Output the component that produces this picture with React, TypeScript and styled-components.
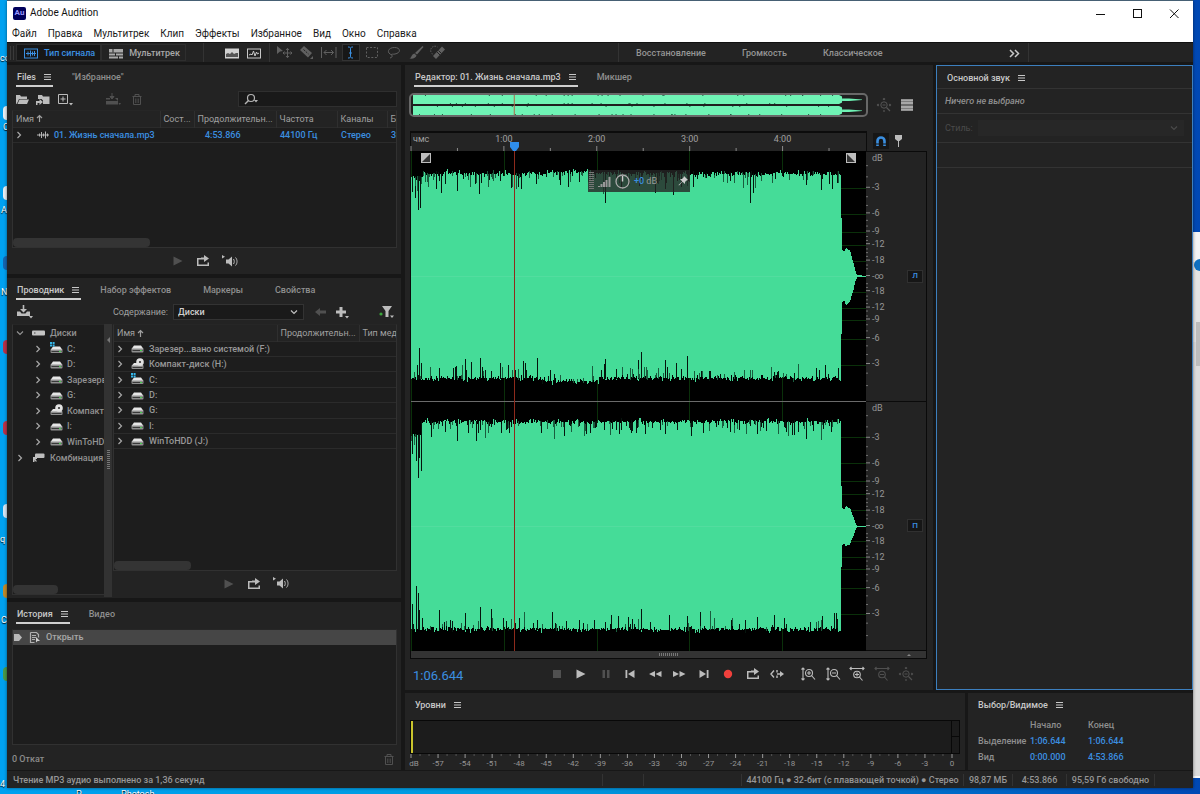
import React from 'react';
import styled, { createGlobalStyle, css } from 'styled-components';

const GlobalStyle = createGlobalStyle`
  * { box-sizing: border-box; }
  body { margin: 0; background: #0091dc; }
  body, button, input, select, table {
    font-family: Roboto, "Noto Sans", sans-serif;
    font-size: 9px;
    line-height: 12px;
    color: #a0a0a0;
  }
  button { background: none; border: 0; padding: 0; margin: 0; cursor: pointer; }
  ul { list-style: none; margin: 0; padding: 0; }
  svg { display: block; }
`;

const BLUE = '#3b8fe0';
const LINE = '#313131';

/* ---------- icons ---------- */

const paths: Record<string, React.ReactNode> = {
  burger: <path d="M1 3.5h7M1 6h7M1 8.5h7" stroke="currentColor" />,
  min: <path d="M2 7.5h9" stroke="currentColor" />,
  max: <rect x="2.5" y="2.5" width="8" height="8" fill="none" stroke="currentColor" />,
  close: <path d="M2 2.5l8.500 8.500M10.500 2.500L2 11" stroke="currentColor" fill="none" />,
  wave: <g fill="none" stroke="currentColor"><rect x=".5" y="3" width="13" height="9" /><path d="M2 7.500h10M4 5.500v4M6.500 4.500v6M8.500 5.500v4M10.500 5v5" /></g>,
  multi: <g fill="currentColor"><path d="M0 3h14v3.500H0zM0 7.500h6v2H0zM7 7.500h7v2H7zM0 10.500h9v2H0zM10 10.500h4v2h-4z" /><path d="M4 3v3.500" stroke="#222" /></g>,
  spectral: <g><rect x=".5" y="3" width="13" height="9" fill="#d0d0d0" stroke="#d0d0d0" /><path d="M1 8l2-1 2 1 2-2 2 2 2-1 2 0v4H1z" fill="#555" /></g>,
  pitch: <g fill="none" stroke="currentColor"><rect x=".5" y="3" width="13" height="9" /><path d="M2 9l2-1 1 1 1.500-4 1.500 5 1.500-4 1 2 1.500-1" /></g>,
  move: <g fill="currentColor"><path d="M0 1l6 5-3 .4L0 9z" /><path d="M10.500 3.500v9M6 8h9M9 5l1.500-1.700L12 5M9 11l1.500 1.700L12 11M7.500 6.500L6 8l1.500 1.500M13.500 6.500L15 8l-1.500 1.500" fill="none" stroke="currentColor" /></g>,
  razor: <g><path d="M1 5l4-4 8 7-4 4.500z" fill="currentColor" /><path d="M4.500 4.500l5 4.500" stroke="#222" strokeDasharray="2 1" /><path d="M14 14v-3l-3 3z" fill="currentColor" /></g>,
  slip: <g fill="none" stroke="currentColor"><path d="M.5 2v11M15 2v11M3 7.500h9.500M5.500 5L3 7.500 5.500 10M10 5l2.500 2.500L10 10" /></g>,
  ibeam: <path d="M5 2c1.500 0 2.500.3 2.500 1.500v8c0 1.200-1 1.500-2.500 1.500M10 2c-1.500 0-2.500.3-2.500 1.500M7.500 11.500c0 1.200 1 1.500 2.500 1.500M6 8h3" fill="none" stroke="currentColor" />,
  marquee: <rect x="1.500" y="2.500" width="11" height="10" fill="none" stroke="currentColor" strokeDasharray="2 1.600" />,
  lasso: <path d="M5 10C-1 8 1 2.500 7.500 2.500S14 8 8 9c-3 .5-4-.5-3 1.500.5 1.500-.5 2-2 2.500" fill="none" stroke="currentColor" />,
  brush: <g fill="currentColor"><path d="M13.500 1l1 1L8 9.500 6 8z" /><path d="M5.500 8.500l2 2C7 13 4 14 .5 13.500 3 12.500 2 9.500 5.500 8.500z" /></g>,
  heal: <g><path d="M2 11l9-9.500 3 3L5 14z" fill="currentColor" /><path d="M6 7l3 3M7.500 5.500l3 3" stroke="#222" /><path d="M1.500 9a4 4 0 0 1 5-7" stroke="currentColor" fill="none" strokeDasharray="1.500 1" /></g>,
  chevrons: <path d="M2 4l3.500 3.500L2 11M7 4l3.500 3.500L7 11" fill="none" stroke="currentColor" strokeWidth="1.500" />,
  folder: <path d="M1 3h4l1 1.500h6V7H4l-2 4.500L1 12zM4.500 7.600H14L12 12H2.500z" fill="currentColor" />,
  importFolder: <g fill="currentColor"><path d="M2 3h4l1 1.500h6.500V12H7V8.500L5.500 7H2z" /><path d="M0 9h3.500V7L7 10l-3.500 3v-2H1.500v2H0z" /></g>,
  newFile: <g><path d="M.5 2.500h9v9h-9zM5 4.500v5M2.500 7h5" fill="none" stroke="currentColor" /><path d="M11 11h4l-2 2.500z" fill="currentColor" /></g>,
  insert: <g fill="currentColor"><path d="M1 6h4v1.500H1zM10 6h3v6.500H1V9h12M1 9h12v1H1z" /><path d="M7 1v5M5 4.500L7 7l2-2.500z" stroke="currentColor" /><path d="M13.500 11H16l-1.200 2z" /></g>,
  trash: <path d="M1.500 4.500h9M4 4.500v-2h4v2M2.500 5v7.500h7V5M4.800 6.500v4.500M7.200 6.500v4.500" fill="none" stroke="currentColor" />,
  search: <g><circle cx="7" cy="6" r="3.500" fill="none" stroke="currentColor" strokeWidth="1.200" /><path d="M4.500 8.500L1 12" stroke="currentColor" strokeWidth="1.500" /><path d="M10 8h4l-2 2.500z" fill="currentColor" /></g>,
  play: <path d="M2.500 2.500l9 4.500-9 4.500z" fill="currentColor" />,
  loop: <g fill="currentColor"><path d="M5 3.500h3V1l5 3.500-5 3.500V5.500H5z" /><path d="M1 4h4v1.500H2.500v5h9V8.500H13v3.500H1z" /></g>,
  speaker: <g><path d="M0 1l3 1.800L0 4.600z" fill="currentColor" /><path d="M4 5.500h2.500L10 2.500v10L6.500 9.500H4z" fill="currentColor" /><path d="M11.500 5c1 1.500 1 3.500 0 5M13.500 3.500c2 2 2 6 0 8" fill="none" stroke="currentColor" /></g>,
  download: <g fill="currentColor"><path d="M1 7.500h3l1.500 2h4l1.500-2h3V12H1z" /><path d="M6.700 1h1.600v4H11L7.500 8.500 4 5h2.700zM13 12h4l-2 2.500z" /></g>,
  back: <path d="M1 7l5-4v2.500h6v3H6V11z" fill="currentColor" />,
  plus: <g fill="currentColor"><path d="M4.500 1h3v3.500H11v3H7.500V11h-3V7.500H1v-3h3.500zM10 10h4l-2 2.500z" /></g>,
  funnel: <g fill="currentColor"><path d="M3 1h10L9.500 6v6h-3V6zM11 10.500h4L13 13z" /><circle cx="2" cy="9" r="1.600" fill="#3aa53a" /></g>,
  chevR: <path d="M4.500 3l3 3-3 3" fill="none" stroke="#a8a8a8" strokeWidth="1.200" />,
  chevD: <path d="M3 4.500l3 3 3-3" fill="none" stroke="currentColor" strokeWidth="1.200" />,
  clip: <path d="M0 6h12M2.500 4.500v3M4.500 3v6M6.500 4.500v3M8.500 2.500v7M10.500 4.500v3" fill="none" stroke="#b4b4b4" />,
  sortUp: <path d="M3.500 8V1.500M1 4l2.500-2.500L6 4" fill="none" stroke="currentColor" strokeWidth="1.200" />,
  disk: <g><rect x="0" y="3.500" width="13" height="5" rx="1" fill="#c4c4c4" /><path d="M2 6h1.500" stroke="#444" /></g>,
  drive: <g><path d="M3 3.500h7L12.500 7H.5z" fill="#e6e6e6" /><rect x=".5" y="6.500" width="12" height="4" rx="1" fill="#8f8f8f" /><path d="M1.500 8.500h10" stroke="#3a3a3a" /><path d="M9 8.500h2" stroke="#42d04a" strokeWidth="1.200" /></g>,
  driveWin: <g><path d="M3 4.500h7L12.500 8H.5z" fill="#e6e6e6" /><rect x=".5" y="7.500" width="12" height="3.500" rx="1" fill="#8f8f8f" /><path d="M1.500 9.500h10" stroke="#3a3a3a" /><path d="M9 9.500h2" stroke="#42d04a" /><path d="M0 0h2v2H0zM2.600 0h2v2h-2zM0 2.600h2v2H0zM2.600 2.600h2v2h-2z" fill="#35b6e8" /></g>,
  driveCd: <g><path d="M3 5h7l2.500 3H.5z" fill="#e6e6e6" /><rect x=".5" y="7.500" width="12" height="3.500" rx="1" fill="#8f8f8f" /><path d="M1.500 9.500h10" stroke="#3a3a3a" /><circle cx="9" cy="4" r="3.800" fill="#e2e2e2" /><circle cx="9" cy="4" r="1.100" fill="#333" /></g>,
  shortcut: <g fill="#bdbdbd"><rect x="3" y="2.500" width="9.500" height="4.500" rx="1" /><path d="M1 6h4v2H3.500L5 10.500H3.500L2.500 9v2H1z" /></g>,
  mark: <path d="M0 2h5l3 3.500L5 9H0z" fill="#b8b8b8" />,
  doc: <g><path d="M1.500 1.500h6l2 2v3M1.500 1.500v10h4M3 4.500h4M3 6.500h4M3 8.500h3" fill="none" stroke="#b0b0b0" strokeWidth="1.200" /><path d="M7 6l4 4H8.500L7 11.500z" fill="#d0d0d0" /></g>,
  zoomAll: <g fill="none" stroke="currentColor"><circle cx="7" cy="7" r="3.200" /><path d="M5.500 7h3M9.500 9.500L13 13M7 0v2M7 12v2M0 7h2M12 7h2M6 1.500L7 .5l1 1M1.500 6l-1 1 1 1M12.500 6l1 1-1 1" strokeWidth="1.200" /></g>,
  list: <g><rect x="1" y="1.500" width="12" height="11" fill="#7d7d7d" /><path d="M1 2h12M1 5h12M1 9h12M1 12h12" stroke="#d4d4d4" /><path d="M1 7h12" stroke="#5c5c5c" /></g>,
  magnet: <g fill="none"><path d="M3.500 12V7a3.500 3.500 0 0 1 7 0v5" stroke="currentColor" strokeWidth="2.600" /><path d="M1.500 10h4M8.500 10h4" stroke="#161616" /></g>,
  pin: <path d="M3 1h7v4L7.500 7H7v6H6V7h-.5L3 5z" fill="currentColor" />,
  stop: <rect x="3" y="3" width="8" height="8" fill="currentColor" />,
  pause: <path d="M3.500 3H6v8H3.500zM8 3h2.500v8H8z" fill="currentColor" />,
  prev: <path d="M2.500 3h1.800v8H2.500zM11.500 3v8L5 7z" fill="currentColor" />,
  next: <path d="M9.700 3h1.800v8H9.700zM2.500 3v8L9 7z" fill="currentColor" />,
  rew: <path d="M7 4v6L1 7zM13.500 4v6l-6-3z" fill="currentColor" />,
  fwd: <path d="M1 4v6l6-3zM7.500 4v6l6-3z" fill="currentColor" />,
  rec: <circle cx="7" cy="7" r="4.200" fill="#f0403c" />,
  skip: <g fill="none" stroke="currentColor" strokeWidth="1.400"><path d="M4 3.500L1 7l3 3.500M7 3v2.500M7 8.500V11M7 7h5" /><path d="M10 4l4 3-4 3z" fill="currentColor" stroke="none" /></g>,
  zoomInV: <g fill="none" stroke="currentColor" strokeWidth="1.100"><path d="M2 1v12M.5 2.500L2 1l1.500 1.500M.5 11.500L2 13l1.500-1.500" /><circle cx="8" cy="6" r="3.500" /><path d="M6 6h4M8 4v4M10.500 8.500l3.500 4" /></g>,
  zoomOutV: <g fill="none" stroke="currentColor" strokeWidth="1.100"><path d="M2 1v12M.5 2.500L2 1l1.500 1.500M.5 11.500L2 13l1.500-1.500" /><circle cx="8" cy="6" r="3.500" /><path d="M6 6h4M10.500 8.500l3.500 4" /></g>,
  zoomInH: <g fill="none" stroke="currentColor" strokeWidth="1.100"><path d="M0 1.500h14M1.500 0L0 1.500 1.500 3M12.500 0L14 1.500 12.500 3" /><circle cx="7" cy="7.500" r="3.300" /><path d="M5 7.500h4M7 5.500v4M9.500 10l3 3.500" /></g>,
  zoomOutH: <g fill="none" stroke="currentColor" strokeWidth="1.100"><path d="M0 1.500h14M1.500 0L0 1.500 1.500 3M12.500 0L14 1.500 12.500 3" /><circle cx="7" cy="7.500" r="3.300" /><path d="M5 7.500h4M9.500 10l3 3.500" /></g>,
};

const Glyph = styled.svg<{ $dim?: boolean }>`
  flex: none;
  overflow: visible;
  color: ${(p) => (p.$dim ? '#555' : 'inherit')};
`;

function Icon({ name, size = 14, dim }: { name: string; size?: number; dim?: boolean }) {
  return (
    <Glyph $dim={dim} width={size} height={size} viewBox={`0 0 ${size} ${size}`} aria-hidden="true">
      {paths[name]}
    </Glyph>
  );
}

/* ---------- desktop and window frame ---------- */

const Desktop = styled.div`
  position: relative;
  min-height: 100vh;
  padding: 1px 7px 6px;
  display: flex;
  overflow: hidden;
  background: linear-gradient(90deg, #00a1f0 0%, #009ade 45%, #0071cc 75%, #0048b4 100%);
`;

const DesktopLabel = styled.span<{ $y: number; $x?: number }>`
  position: absolute;
  top: ${(p) => p.$y}px;
  left: ${(p) => p.$x ?? 0}px;
  color: #fff;
  text-shadow: 0 1px 1px #000;
  white-space: nowrap;
`;

const DesktopIcon = styled.span<{ $y: number; $c: string }>`
  position: absolute;
  top: ${(p) => p.$y}px;
  left: 3px;
  width: 14px;
  height: 14px;
  border-radius: 4px;
  background: ${(p) => p.$c};
`;

const BackWindow = styled.div`
  position: absolute;
  right: 0;
  top: 232px;
  bottom: 16px;
  width: 40px;
  background: linear-gradient(#f4f4f4 0 30px, #e4e4e4 30px 110px, #dcdcdc 110px);
  border-bottom: 2px solid #f8f8f8;
`;

const BackScroll = styled.div`
  position: absolute;
  right: 0;
  top: 90px;
  width: 4px;
  height: 44px;
  background: #bdbdbd;
`;

const BackBadge = styled.div`
  position: absolute;
  right: -6px;
  top: 27px;
  width: 12px;
  height: 12px;
  border-radius: 50%;
  background: #1070c0;
`;

const Window = styled.div`
  position: relative;
  flex: 1;
  min-width: 0;
  display: flex;
  flex-direction: column;
  background: #171717;
  box-shadow: 0 -1px 0 #466074, 0 0 3px rgba(0, 0, 0, 0.5);
`;

const TitleBar = styled.header`
  display: flex;
  align-items: center;
  height: 24px;
  padding-left: 6px;
  background: #fff;
  color: #111;
`;

const Logo = styled.span`
  width: 13px;
  height: 13px;
  margin-right: 4px;
  border-radius: 2px;
  background: #00005b;
  color: #9999ff;
  font-size: 8px;
  font-weight: 700;
  text-align: center;
`;

const AppName = styled.h1`
  flex: 1;
  margin: 0;
  font-size: 10px;
  font-weight: 400;
`;

const FrameButton = styled.button`
  display: flex;
  align-items: center;
  justify-content: center;
  width: 37px;
  height: 22px;
  color: #111;
`;

const MenuBar = styled.nav`
  display: flex;
  gap: 11px;
  height: 17px;
  padding-left: 5px;
  background: #fff;
`;

const MenuItem = styled.button`
  font-size: 10px;
  line-height: 16px;
  color: #1a1a1a;
`;

/* ---------- tool bar ---------- */

const ToolBar = styled.div`
  display: flex;
  align-items: center;
  height: 20px;
  margin-bottom: 3px;
  background: #232323;
  border-top: 1px solid #111;
`;

const Grip = styled.span`
  width: 4px;
  height: 14px;
  margin: 0 2px 0 3px;
  border: solid #3a3a3a;
  border-width: 0 1px;
`;

const ModeButton = styled.button<{ $on?: boolean }>`
  display: flex;
  align-items: center;
  gap: 6px;
  height: 17px;
  padding: 0 5px 0 7px;
  border: 1px solid #2e2e2e;
  background: ${(p) => (p.$on ? '#171717' : 'transparent')};
  color: ${(p) => (p.$on ? BLUE : '#a8a8a8')};
  font-weight: 500;
`;

const Divider = styled.span<{ $gap: number }>`
  width: 1px;
  align-self: stretch;
  margin: 0 ${(p) => p.$gap}px;
  background: #333;
`;

const ToolButton = styled.button<{ $on?: boolean; $dim?: boolean }>`
  display: flex;
  align-items: center;
  justify-content: center;
  width: 22px;
  height: 17px;
  color: ${(p) => (p.$on ? BLUE : p.$dim ? '#606060' : '#c8c8c8')};
  ${(p) => p.$on && css`
    background: #171717;
    border: 1px solid #333;
    width: 18px;
    margin: 0 2px;
  `}
`;

const Workspaces = styled.nav`
  display: flex;
  align-items: center;
  gap: 36px;
  width: 411px;
  height: 100%;
  margin-left: auto;
  padding: 0 6px 0 17px;
  border: solid #333;
  border-width: 0 1px;
`;

const WorkspaceButton = styled.button`
  font-weight: 500;
  color: #959595;
  &:last-child { margin-left: auto; color: #c8c8c8; }
`;

const ToolTail = styled.div`
  flex: 0 0 164px;
`;

/* ---------- panels ---------- */

const Workspace = styled.main`
  flex: 1;
  display: grid;
  grid-template-columns: 394px minmax(0, 1fr);
  gap: 4px;
  min-height: 704px;
`;

const LeftColumn = styled.div`
  display: grid;
  grid-template-rows: 209fr 319fr 168fr;
  gap: 4px;
  min-width: 0;
`;

const RightArea = styled.div`
  display: grid;
  grid-template-rows: minmax(0, 1fr) 77px;
  gap: 3px;
  min-width: 0;
`;

const Split = styled.div<{ $side: number }>`
  display: grid;
  grid-template-columns: minmax(0, 1fr) ${(p) => p.$side}px;
  gap: 3px;
  min-width: 0;
`;

const Panel = styled.section<{ $focus?: boolean }>`
  display: flex;
  flex-direction: column;
  min-width: 0;
  min-height: 0;
  background: #232323;
  ${(p) => p.$focus && css`border: 1px solid #3c7fbe;`}
`;

const Tabs = styled.div`
  display: flex;
  flex: none;
  height: 22px;
  padding: 6px 0 0 9px;
  gap: 18px;
`;

const Tab = styled.button<{ $on?: boolean; $line?: boolean }>`
  display: flex;
  gap: 7px;
  height: 16px;
  padding: 0 1px;
  margin-right: ${(p) => (p.$on ? 0 : 12)}px;
  border-bottom: 2px solid ${(p) => (p.$line ? '#cfcfcf' : 'transparent')};
  color: ${(p) => (p.$on ? '#c8c8c8' : '#8f8f8f')};
  font-weight: 500;
  white-space: nowrap;
`;

const Bar = styled.div`
  display: flex;
  align-items: center;
  flex: none;
  height: 23px;
  padding: 0 4px 0 8px;
`;

const Gap = styled.span<{ $w?: number }>`
  flex: ${(p) => (p.$w ? `0 0 ${p.$w}px` : '1')};
`;

const IconButton = styled.button<{ $dim?: boolean; $w?: number }>`
  display: flex;
  align-items: center;
  justify-content: center;
  width: ${(p) => p.$w ?? 22}px;
  height: 18px;
  color: ${(p) => (p.$dim ? '#505050' : '#bcbcbc')};
`;

const SearchBox = styled.label`
  display: flex;
  align-items: center;
  width: 159px;
  height: 16px;
  padding-left: 5px;
  border: 1px solid #2f2f2f;
  background: #191919;
  color: #b4b4b4;
`;

const SearchInput = styled.input`
  flex: 1;
  min-width: 0;
  border: 0;
  outline: 0;
  background: transparent;
`;

const Well = styled.div`
  position: relative;
  flex: 1;
  min-width: 0;
  min-height: 0;
  overflow: hidden;
  background: #1d1d1d;
  border: 1px solid ${LINE};
  border-top-color: #262626;
`;

const FilesWell = styled(Well)`margin: 0 4px 0 5px;`;
const HistoryWell = styled(Well)`margin: 5px 4px 0 5px;`;

const Thumb = styled.div<{ $w: number }>`
  position: absolute;
  left: 0;
  bottom: 0;
  width: ${(p) => p.$w}px;
  height: 9px;
  border-radius: 4px;
  background: #343434;
`;

const Player = styled.div`
  display: flex;
  align-items: center;
  justify-content: center;
  gap: 3px;
  flex: none;
  height: 26px;
`;

const Table = styled.table`
  width: 440px;
  table-layout: fixed;
  border-collapse: collapse;
`;

const Th = styled.th<{ $w?: number }>`
  width: ${(p) => (p.$w ? `${p.$w}px` : 'auto')};
  height: 16px;
  padding: 0 0 0 3px;
  background: #232323;
  border-right: 1px solid #2f2f2f;
  font-weight: 400;
  text-align: left;
  white-space: nowrap;
  overflow: hidden;
`;

const Td = styled.td<{ $blue?: boolean; $indent?: number }>`
  height: 15px;
  padding: 0 0 0 ${(p) => p.$indent ?? 4}px;
  border-top: 1px solid #2b2b2b;
  border-bottom: 1px solid #2b2b2b;
  color: ${(p) => (p.$blue ? BLUE : '#989898')};
  font-weight: 500;
  white-space: nowrap;
`;

const NameCell = styled.span<{ $gap?: number }>`
  display: flex;
  align-items: center;
  gap: ${(p) => p.$gap ?? 5}px;
`;

/* ---------- explorer ---------- */

const Label = styled.label`
  white-space: nowrap;
  margin-right: 5px;
`;

const SelectBox = styled.span<{ $off?: boolean }>`
  display: flex;
  align-items: center;
  width: ${(p) => (p.$off ? 'auto' : '131px')};
  flex: ${(p) => (p.$off ? 1 : 'none')};
  height: 16px;
  padding-right: 3px;
  border: 1px solid ${(p) => (p.$off ? '#272727' : '#333')};
  background: ${(p) => (p.$off ? '#272727' : '#1a1a1a')};
  color: ${(p) => (p.$off ? '#4a4a4a' : '#c0c0c0')};
`;

const Select = styled.select`
  flex: 1;
  min-width: 0;
  appearance: none;
  border: 0;
  padding: 0 4px;
  background: transparent;
  color: #d0d0d0;
  font-weight: 500;
`;

const ExplorerBody = styled.div`
  display: flex;
  flex: 1;
  min-height: 0;
  margin: 1px 4px 1px 5px;
`;

const TreeWell = styled(Well)`
  flex: 0 0 92px;
  border-right: 0;
  margin-bottom: 2px;
`;

const Tree = styled.ul`
  display: grid;
  grid-auto-rows: 1fr;
  height: 140px;
`;

const TreeItem = styled.li<{ $level: number }>`
  display: flex;
  align-items: center;
  gap: ${(p) => (p.$level ? 4 : 5)}px;
  padding-left: ${(p) => (p.$level ? 19 : 1)}px;
  font-weight: 500;
  color: #929292;
  white-space: nowrap;
  & > svg:first-child { margin-right: ${(p) => (p.$level ? 2 : 1)}px; }
`;

const Splitter = styled.div`
  display: flex;
  flex-direction: column;
  justify-content: space-between;
  align-items: center;
  flex: 0 0 8px;
  margin-right: 1px;
  padding: 13px 1px 127px;
  background: #323232;
`;

const Arrow = styled.span`
  border: 3px solid transparent;
  border-left: 0;
  border-right-color: #777;
`;

const SplitDots = styled.span`
  width: 3px;
  height: 20px;
  background: repeating-linear-gradient(#777 0 1px, transparent 1px 2px);
`;

const ListSide = styled.div`
  display: flex;
  flex-direction: column;
  flex: 1;
  min-width: 0;
`;

const ListTable = styled(Table)`height: 124px;`;

/* ---------- history ---------- */

const HistoryRow = styled.div`
  display: flex;
  align-items: center;
  gap: 5px;
  height: 15px;
  padding-left: 1px;
  background: #464646;
  color: #a8a8a8;
  font-weight: 500;
`;

const PanelFoot = styled.footer`
  display: flex;
  align-items: center;
  justify-content: space-between;
  flex: none;
  height: 25px;
  padding: 2px 6px 0 5px;
  color: #8c8c8c;
  font-weight: 500;
`;

/* ---------- editor ---------- */

const OverviewRow = styled.div`
  display: flex;
  align-items: center;
  gap: 9px;
  flex: none;
  height: 26px;
  margin-top: 5px;
  padding-left: 4px;
`;

const Overview = styled.div`
  flex: 1;
  height: 24px;
  border: 2px solid #686868;
  border-radius: 5px;
  background: #1f1f1f;
  padding: 0 2px;
`;

const SideTools = styled.div`
  display: flex;
  gap: 9px;
  width: 56px;
`;

const RulerRow = styled.div`
  display: flex;
  align-items: center;
  flex: none;
  margin-top: 13px;
  padding-left: 5px;
  height: 20px;
`;

const Ruler = styled.div`
  position: relative;
  flex: 1;
  height: 20px;
  border: 1px solid #0c0c0c;
  border-width: 2px 1px 0;
  background: #242424;
`;

const RulerLabels = styled.div`
  display: grid;
  grid-template-columns: 10.200% repeat(4, 20.417%) 1fr;
  color: #a0a0a0;
  text-align: center;
  & > :first-child { text-align: left; padding-left: 2px; }
`;

const RulerTicks = styled.svg`
  position: absolute;
  left: 0;
  bottom: 0;
  width: 100%;
  height: 5px;
  overflow: visible;
`;

const RulerTools = styled.div`
  display: flex;
  align-items: center;
  gap: 3px;
  width: 66px;
  padding-left: 6px;
`;

const MagnetButton = styled.button`
  display: flex;
  align-items: center;
  justify-content: center;
  width: 16px;
  height: 16px;
  background: #161616;
  color: ${BLUE};
`;

const WaveRow = styled.div`
  display: grid;
  grid-template-columns: minmax(0, 1fr) 60px;
  flex: 1;
  min-height: 0;
  margin: 0 6px 0 5px;
  border: 1px solid #0a0a0a;
  border-width: 0 1px;
`;

const WaveArea = styled.div`
  position: relative;
  background: #000;
  overflow: hidden;
`;

const Fill = styled.svg`
  position: absolute;
  inset: 0;
  width: 100%;
  height: 100%;
`;

const Playhead = styled.span`
  position: absolute;
  left: 22.700%;
  top: 0;
  bottom: 0;
  width: 1px;
  background: #8e2a1c;
`;

const PlayheadCap = styled.svg`
  position: absolute;
  left: 22.700%;
  bottom: 0;
  margin-left: -4px;
`;

const Hud = styled.div`
  position: absolute;
  left: 38.900%;
  top: 19px;
  display: flex;
  align-items: center;
  gap: 4px;
  width: 102px;
  height: 22px;
  padding-right: 2px;
  background: rgba(38, 38, 38, 0.8);
`;

const HudGrip = styled.span`
  width: 5px;
  height: 18px;
  margin-left: 1px;
  background: repeating-linear-gradient(#777 0 1px, transparent 1px 2px);
`;

const HudText = styled.span`
  flex: 1;
  color: #9a9a9a;
  b { color: ${BLUE}; font-weight: 500; }
`;

const FadeButton = styled.button<{ $right?: boolean }>`
  position: absolute;
  top: 2px;
  ${(p) => (p.$right ? 'right: 10px;' : 'left: 10px;')}
`;

const Scales = styled.div`
  display: grid;
  grid-template-rows: 1fr 1fr;
  border-top: 1px solid #0a0a0a;
`;

const Scale = styled.div`
  display: flex;
  align-items: center;
  border-bottom: 1px solid #0a0a0a;
  padding-right: 3px;
`;

const ScaleSvg = styled.svg`
  flex: 1;
  min-width: 0;
  height: 100%;
  overflow: visible;
  font-size: 9px;
  fill: #969696;
`;

const ChannelButton = styled.button`
  width: 16px;
  height: 13px;
  border: 1px solid #303030;
  background: #161616;
  color: ${BLUE};
  font-size: 8px;
  line-height: 10px;
  font-weight: 500;
`;

const HScroll = styled.div`
  display: grid;
  grid-template-columns: 1fr 20px 1fr;
  align-items: center;
  flex: none;
  height: 8px;
  margin: 0 6px 0 5px;
  border: 1px solid #0a0a0a;
  border-top: 0;
  background: #333;
`;

const ScrollDots = styled.span`
  height: 3px;
  background: repeating-linear-gradient(90deg, #777 0 1px, transparent 1px 2px);
`;

const UpArrow = styled.span`
  justify-self: end;
  margin-right: 15px;
  border: 2px solid transparent;
  border-top: 0;
  border-bottom-color: #888;
`;

const Transport = styled.div`
  display: flex;
  align-items: center;
  flex: none;
  height: 31px;
  padding: 0 16px 2px 8px;
`;

const TimeCode = styled.span`
  flex: 1;
  padding-top: 4px;
  font-size: 13px;
  line-height: 16px;
  color: ${BLUE};
`;

const ButtonSet = styled.div<{ $w: number }>`
  display: flex;
  justify-content: space-between;
  width: ${(p) => p.$w}px;
  & + & { margin-left: 9px; }
`;

/* ---------- levels / selection / essential sound ---------- */

const Meter = styled.div`
  display: grid;
  grid-template: 1fr 1fr / 1fr 8px;
  height: 34px;
  margin: 5px 5px 0;
  border: 1px solid #080808;
  background: #1c1c1c;
`;

const MeterCell = styled.span<{ $lit?: boolean }>`
  border-left: ${(p) => (p.$lit ? '2px solid #c9c42c' : '1px solid #080808')};
  &:nth-child(2) { border-bottom: 1px solid #080808; }
`;

const MeterScale = styled.svg`
  width: auto;
  height: 15px;
  margin: 0 13px 0 6px;
  overflow: visible;
  font-size: 8px;
  fill: #969696;
`;

const SelTable = styled.table`
  width: 168px;
  margin: 2px 0 0 9px;
  border-collapse: collapse;
  table-layout: fixed;
  th, td { height: 16px; padding: 0 0 0 1px; text-align: left; font-weight: 500; color: #8f8f8f; white-space: nowrap; }
  td { color: ${BLUE}; }
  th:first-child { width: 52px; }
`;

const SoundRow = styled.div<{ $h: number }>`
  display: flex;
  align-items: center;
  flex: none;
  height: ${(p) => p.$h}px;
  padding: 0 8px;
  border-top: 1px solid #333;
`;

const Nothing = styled.em`
  font-weight: 500;
  color: #8f8f8f;
`;

const OffLabel = styled(Label)`color: #4a4a4a;`;

const StatusBar = styled.footer`
  display: flex;
  align-items: center;
  height: 17px;
  margin-top: 1px;
  padding-left: 6px;
  background: #232323;
  font-weight: 500;
  color: #969696;
`;

const StatusMain = styled.span`flex: 1;`;

const StatusCell = styled.span<{ $w: number }>`
  width: ${(p) => p.$w}px;
  border-left: 1px solid #333;
  text-align: center;
  white-space: nowrap;
`;

/* ---------- waveform geometry ---------- */

const W = 456;
const END = 431;

function random(seed: number) {
  let s = seed;
  return () => {
    s = (s * 1664525 + 1013904223) % 4294967296;
    return s / 4294967296;
  };
}

type Edge = { base: (x: number) => number; dir: 1 | -1; seed: number; busy: number; peaks: [number, number][] };

/* One edge of a channel: an outline plus dark spikes that cut into the body. */
function buildEdge({ base, dir, seed, busy, peaks }: Edge) {
  const r = random(seed);
  const outline: string[] = [];
  const spikes: string[] = [];
  const soft: string[] = [];
  for (let x = 0; x < END; x++) {
    const y = base(x) + dir * Math.round(r() * r() * 4 - r() * r() * 5 + 1);
    outline.push(`${x},${y} ${x + 1},${y}`);
    const roll = r();
    if (roll < busy) {
      const h = 3 + Math.round(r() * r() * 18);
      (r() > 0.45 ? soft : spikes).push(`M${x + 0.5} ${y}v${dir * h}`);
    }
  }
  peaks.forEach(([x, h]) => spikes.push(`M${x + 0.5} ${base(x)}v${dir * h}`));
  return { outline, spikes: spikes.join(''), soft: soft.join('') };
}

const channels = [
  {
    mid: 125.5,
    tail: 1,
    top: buildEdge({ dir: 1, seed: 11, busy: 0.3, base: (x) => (x < 12 ? 25 : 22 - (x > 135 && x < 180 ? 2 : 0)), peaks: [[1, 16], [4, 22], [7, 34], [9, 32], [30, 20], [46, 18], [68, 21], [107, 14], [194, 30], [245, 20], [263, 22], [340, 30], [343, 20], [411, 17], [422, 16]] }),
    bottom: buildEdge({ dir: -1, seed: 23, busy: 0.16, base: (x) => (x > 130 && x < 188 ? 231 : 228), peaks: [[8, 31], [10, 16], [28, 11], [44, 12], [54, 20], [60, 17], [69, 21], [80, 8], [89, 16], [97, 14], [104, 9], [112, 18], [115, 9], [126, 21], [190, 9], [193, 15], [194, 20], [205, 10], [228, 19], [231, 27], [257, 12], [266, 16], [277, 23], [406, 11], [415, 14]] }),
  },
  {
    mid: 376,
    tail: 0.7,
    top: buildEdge({ dir: 1, seed: 37, busy: 0.24, base: (x) => (x < 10 ? 284 : 271), peaks: [[1, 20], [5, 27], [7, 44], [8, 24], [10, 50], [20, 16], [34, 11], [57, 12], [65, 20], [130, 12], [175, 13], [208, 13], [225, 12], [281, 15], [382, 14], [396, 18]] }),
    bottom: buildEdge({ dir: -1, seed: 53, busy: 0.15, base: () => 480, peaks: [[1, 26], [5, 44], [7, 37], [8, 20], [28, 20], [39, 10], [54, 17], [69, 23], [80, 21], [108, 12], [126, 10], [144, 7], [155, 9], [183, 10], [207, 14], [217, 13], [231, 21], [259, 15], [277, 14], [290, 18], [347, 13], [364, 15], [412, 14]] }),
  },
];

const tail = (mid: number, s: number) =>
  [[431, 58], [432, 58], [432, 27], [434, 24], [436, 29], [438, 27], [440, 26], [442, 18], [444, 12], [445, 6], [447, 1], [456, 0.5]]
    .map(([x, h]) => `${x},${mid + s * h}`);

function Waves() {
  return (
    <Fill viewBox={`0 0 ${W} 501`} preserveAspectRatio="none" shapeRendering="crispEdges" aria-label="Форма сигнала">
      {[0, 93, 186, 279, 372].map((x) => <path key={x} d={`M${x + 0.5} 0V501`} stroke="#0a300a" />)}
      {[37, 63, 81, 94, 110, 141, 157, 169, 188, 214, 287, 313, 331, 344, 360, 391, 407, 419, 438, 464].map((y) => (
        <path key={y} d={`M0 ${y + 0.5}H456`} stroke="#0a300a" />
      ))}
      {channels.map((c) => (
        <g key={c.mid}>
          <polygon
            fill="#45dc98"
            points={[...c.top.outline, ...tail(c.mid, -c.tail), ...tail(c.mid, c.tail).reverse(), ...[...c.bottom.outline].reverse().map((p) => p.split(' ').reverse().join(' '))].join(' ')}
          />
          <path d={c.top.spikes + c.bottom.spikes} stroke="#06130c" />
          <path d={c.top.soft + c.bottom.soft} stroke="#1a5c3d" />
          <path d={`M0 ${c.mid}H447`} stroke="#52dd9f" />
        </g>
      ))}
      <path d="M0 250.500H456" stroke="#6a6a6a" />
    </Fill>
  );
}

function OverviewWave() {
  const r = random(7);
  const nicks = Array.from({ length: 90 }, () => {
    const x = Math.round(r() * 428);
    return `M${x + 0.5} ${[0, 8, 11, 19][Math.floor(r() * 4)]}v1`;
  }).join('');
  return (
    <svg width="100%" height="20" viewBox="0 0 452 20" preserveAspectRatio="none" aria-label="Обзор">
      <path d="M0 0H427L430 1.500V7.500L427 9H0zM0 11H427L430 12.500V18.500L427 20H0z" fill="#6ff3b5" />
      <path d="M430 3.500H437L450 4.500V5L437 6H430zM430 14.500H437L450 15.500V16L437 17H430z" fill="#6ff3b5" />
      <path d={nicks} stroke="#1d5a40" />
      <path d="M101.500 0V20" stroke="#b06a4a" />
    </svg>
  );
}

function FadeIcon({ flip }: { flip?: boolean }) {
  return (
    <svg width="10" height="10" viewBox="0 0 10 10" aria-hidden="true">
      <rect width="10" height="10" fill="#bdbdbd" />
      <path d={flip ? 'M1 1L9 9H1z' : 'M9 1V9H1z'} fill="#333" />
    </svg>
  );
}

const marks: [string, number][] = [['dB', 2.4], ['-3', 14.2], ['-6', 24.5], ['-9', 31.8], ['-12', 36.9], ['-18', 43.5], ['-∞', 49.7], ['-18', 55.8], ['-12', 62.4], ['-9', 67.2], ['-6', 74.7], ['-3', 85.1]];
const minor = [5.5, 10, 18, 21.5, 27.5, 29.8, 34, 35.6, 39, 40.5, 42, 45.5, 47, 53, 54.5, 58, 59.5, 61, 64, 66, 69.5, 72, 78, 81.5, 89, 94];

function ScaleAxis() {
  return (
    <ScaleSvg width="40">
      {marks.map(([t, y], i) => (
        <g key={i}>
          {i > 0 && <line x1="0" x2="4" y1={`${y}%`} y2={`${y}%`} stroke="#888" />}
          <text x="6" y={`${y}%`} dominantBaseline="central">{t}</text>
        </g>
      ))}
      {minor.map((y) => <line key={y} x1="0" x2="2" y1={`${y}%`} y2={`${y}%`} stroke="#707070" />)}
    </ScaleSvg>
  );
}

/* ---------- data ---------- */

const drives: [string, string][] = [['Зарезер...вано системой (F:)', 'drive'], ['Компакт-диск (H:)', 'driveCd'], ['C:', 'driveWin'], ['D:', 'drive'], ['G:', 'drive'], ['I:', 'drive'], ['WinToHDD (J:)', 'drive']];
const tree: [string, string][] = [['C:', 'driveWin'], ['D:', 'drive'], ['Зарезервировано', 'drive'], ['G:', 'drive'], ['Компакт-диск', 'driveCd'], ['I:', 'drive'], ['WinToHDD (J:)', 'drive']];
const tools: [string, string][] = [['move', 'Перемещение'], ['razor', 'Лезвие'], ['slip', 'Сдвиг'], ['ibeam', 'Выделение времени'], ['marquee', 'Область'], ['lasso', 'Лассо'], ['brush', 'Кисть'], ['heal', 'Восстанавливающая кисть']];
const transport: [string, string, boolean][] = [['stop', 'Стоп', true], ['play', 'Воспроизвести', false], ['pause', 'Пауза', true], ['prev', 'В начало', false], ['rew', 'Назад', false], ['fwd', 'Вперед', false], ['next', 'В конец', false], ['rec', 'Запись', false], ['loop', 'Повтор', false], ['skip', 'Пропустить выделение', false]];
const zooms: [string, string, boolean][] = [['zoomInV', 'Увеличить амплитуду', false], ['zoomOutV', 'Уменьшить амплитуду', false], ['zoomInH', 'Увеличить время', false], ['zoomOutH', 'Уменьшить время', true], ['zoomAll', 'Показать все', true]];

function ActiveTab({ children, line = true }: { children: React.ReactNode; line?: boolean }) {
  return <Tab $on $line={line}>{children}<Icon name="burger" size={9} /></Tab>;
}

function NameHead({ width }: { width: number }) {
  return <Th $w={width}><NameCell $gap={2}>Имя<Icon name="sortUp" size={9} /></NameCell></Th>;
}

function PlayerControls() {
  return (
    <Player>
      <IconButton aria-label="Воспроизвести" $dim><Icon name="play" /></IconButton>
      <IconButton aria-label="Повтор"><Icon name="loop" /></IconButton>
      <IconButton aria-label="Автовоспроизведение" $w={24}><Icon name="speaker" size={15} /></IconButton>
    </Player>
  );
}

function FilesPanel() {
  return (
    <Panel>
      <Tabs><ActiveTab>Files</ActiveTab><Tab>"Избранное"</Tab></Tabs>
      <Bar>
        <IconButton aria-label="Открыть" $w={14}><Icon name="folder" /></IconButton><Gap $w={7} />
        <IconButton aria-label="Импорт" $w={14}><Icon name="importFolder" /></IconButton><Gap $w={7} />
        <IconButton aria-label="Новый" $w={15}><Icon name="newFile" /></IconButton><Gap $w={32} />
        <IconButton aria-label="Вставить" $w={15} $dim><Icon name="insert" /></IconButton><Gap $w={11} />
        <IconButton aria-label="Удалить" $w={14} $dim><Icon name="trash" size={13} /></IconButton><Gap />
        <SearchBox><Icon name="search" /><SearchInput aria-label="Поиск" /></SearchBox>
      </Bar>
      <FilesWell>
        <Table>
          <thead>
            <tr><NameHead width={147} /><Th $w={34}>Сост...</Th><Th $w={82}>Продолжительн...</Th><Th $w={61}>Частота</Th><Th $w={50}>Каналы</Th><Th>Бит</Th></tr>
          </thead>
          <tbody>
            <tr>
              <Td $blue $indent={0}><NameCell><Icon name="chevR" size={12} /><Gap $w={2} /><Icon name="clip" size={12} />01. Жизнь сначала.mp3</NameCell></Td>
              <Td /><Td $blue $indent={11}>4:53.866</Td><Td $blue>44100 Гц</Td><Td $blue>Стерео</Td><Td $blue>32</Td>
            </tr>
          </tbody>
        </Table>
        <Thumb $w={137} />
      </FilesWell>
      <PlayerControls />
    </Panel>
  );
}

function ExplorerPanel() {
  return (
    <Panel>
      <Tabs><ActiveTab>Проводник</ActiveTab><Tab>Набор эффектов</Tab><Tab>Маркеры</Tab><Tab>Свойства</Tab></Tabs>
      <Bar>
        <IconButton aria-label="Импорт" $w={16}><Icon name="download" size={15} /></IconButton><Gap $w={82} />
        <Label htmlFor="content">Содержание:</Label>
        <SelectBox><Select id="content"><option>Диски</option></Select><Icon name="chevD" size={12} /></SelectBox><Gap $w={9} />
        <IconButton aria-label="Назад" $w={14} $dim><Icon name="back" size={13} /></IconButton><Gap $w={7} />
        <IconButton aria-label="Добавить" $w={14}><Icon name="plus" size={12} /></IconButton><Gap />
        <IconButton aria-label="Фильтр" $w={22}><Icon name="funnel" /></IconButton>
      </Bar>
      <ExplorerBody>
        <TreeWell>
          <Tree>
            <TreeItem $level={0}><Icon name="chevD" size={12} /><Icon name="disk" size={13} />Диски</TreeItem>
            {tree.map(([name, icon]) => (
              <TreeItem key={name} $level={1}><Icon name="chevR" size={12} /><Icon name={icon} size={13} />{name}</TreeItem>
            ))}
            <TreeItem $level={0}><Icon name="chevR" size={12} /><Icon name="shortcut" size={13} />Комбинация</TreeItem>
          </Tree>
          <Thumb $w={45} />
        </TreeWell>
        <Splitter><Arrow /><SplitDots /></Splitter>
        <ListSide>
          <Well>
            <ListTable>
              <thead><tr><NameHead width={163} /><Th $w={82}>Продолжительн...</Th><Th>Тип медиа</Th></tr></thead>
              <tbody>
                {drives.map(([name, icon]) => (
                  <tr key={name}>
                    <Td $indent={0}><NameCell><Icon name="chevR" size={12} /><Icon name={icon} size={13} />{name}</NameCell></Td><Td /><Td />
                  </tr>
                ))}
              </tbody>
            </ListTable>
            <Thumb $w={77} />
          </Well>
          <PlayerControls />
        </ListSide>
      </ExplorerBody>
    </Panel>
  );
}

function HistoryPanel() {
  return (
    <Panel>
      <Tabs><ActiveTab>История</ActiveTab><Tab>Видео</Tab></Tabs>
      <HistoryWell>
        <HistoryRow><Icon name="mark" size={10} /><Icon name="doc" size={12} />Открыть</HistoryRow>
      </HistoryWell>
      <PanelFoot>0 Откат<IconButton aria-label="Удалить" $w={12} $dim><Icon name="trash" size={13} /></IconButton></PanelFoot>
    </Panel>
  );
}

function EditorPanel() {
  return (
    <Panel>
      <Tabs><ActiveTab>Редактор: 01. Жизнь сначала.mp3</ActiveTab><Tab>Микшер</Tab></Tabs>
      <OverviewRow>
        <Overview><OverviewWave /></Overview>
        <SideTools><Icon name="zoomAll" dim /><Icon name="list" /></SideTools>
      </OverviewRow>
      <RulerRow>
        <Ruler>
          <RulerLabels><span>чмс</span><span>1:00</span><span>2:00</span><span>3:00</span><span>4:00</span></RulerLabels>
          <RulerTicks>
            {Array.from({ length: 10 }, (_, i) => (
              <line key={i} x1={`${i * 10.208}%`} x2={`${i * 10.208}%`} y1={i % 2 ? 2 : 0} y2="5" stroke="#8a8a8a" />
            ))}
          </RulerTicks>
          <PlayheadCap width="9" height="9" viewBox="0 0 9 9"><path d="M0 0h9v5L6 9H3L0 5z" fill="#2f8eea" /></PlayheadCap>
        </Ruler>
        <RulerTools>
          <MagnetButton aria-label="Привязка"><Icon name="magnet" /></MagnetButton>
          <IconButton aria-label="Маркер" $w={14}><Icon name="pin" /></IconButton>
        </RulerTools>
      </RulerRow>
      <WaveRow>
        <WaveArea>
          <Waves />
          <Playhead />
          <FadeButton aria-label="Нарастание"><FadeIcon /></FadeButton>
          <FadeButton aria-label="Затухание" $right><FadeIcon flip /></FadeButton>
          <Hud>
            <HudGrip />
            <svg width="13" height="11" viewBox="0 0 13 11" aria-hidden="true"><path d="M0 10h2v1H0zM2.500 8h2v3h-2zM5 6h2v5H5zM7.500 4h2v7h-2zM10.500 1h2v10h-2z" fill="#999" /></svg>
            <svg width="15" height="15" viewBox="0 0 15 15" aria-hidden="true"><circle cx="7.500" cy="7.500" r="6.500" fill="none" stroke="#aaa" strokeWidth="1.300" /><path d="M7.500 2v5.500" stroke="#ccc" strokeWidth="1.500" /></svg>
            <HudText><b>+0</b> dB</HudText>
            <svg width="10" height="10" viewBox="0 0 10 10" aria-hidden="true"><path d="M6 0l4 4-1.500.5L7 6v2L4.500 5.800 1 9.500.5 9l3.700-3.500L2 3h2l1.500-1.500z" fill="#ccc" /></svg>
          </Hud>
        </WaveArea>
        <Scales>
          <Scale><ScaleAxis /><ChannelButton>Л</ChannelButton></Scale>
          <Scale><ScaleAxis /><ChannelButton>П</ChannelButton></Scale>
        </Scales>
      </WaveRow>
      <HScroll><span /><ScrollDots /><UpArrow /></HScroll>
      <Transport>
        <TimeCode>1:06.644</TimeCode>
        <ButtonSet $w={242}>
          {transport.map(([icon, label, dim]) => <IconButton key={icon} aria-label={label} $dim={dim}><Icon name={icon} /></IconButton>)}
        </ButtonSet>
        <ButtonSet $w={120}>
          {zooms.map(([icon, label, dim]) => <IconButton key={icon} aria-label={label} $dim={dim}><Icon name={icon} /></IconButton>)}
        </ButtonSet>
      </Transport>
    </Panel>
  );
}

function SoundPanel() {
  return (
    <Panel $focus>
      <Tabs><ActiveTab line={false}>Основной звук</ActiveTab></Tabs>
      <SoundRow $h={25}><Nothing>Ничего не выбрано</Nothing></SoundRow>
      <SoundRow $h={29}>
        <OffLabel htmlFor="style">Стиль:</OffLabel>
        <SelectBox $off><Select id="style" disabled /><Icon name="chevD" size={12} /></SelectBox>
      </SoundRow>
      <SoundRow $h={25} />
      <SoundRow $h={25} />
    </Panel>
  );
}

function LevelsPanel() {
  return (
    <Panel>
      <Tabs><ActiveTab line={false}>Уровни</ActiveTab></Tabs>
      <Meter><MeterCell $lit /><MeterCell /><MeterCell $lit /><MeterCell /></Meter>
      <MeterScale>
        {Array.from({ length: 61 }, (_, i) => (
          <line key={i} x1={`${i / 0.6}%`} x2={`${i / 0.6}%`} y1="0" y2={i % 3 ? 2 : 4} stroke={i % 3 ? '#555' : '#999'} />
        ))}
        {Array.from({ length: 21 }, (_, i) => (
          <text key={i} x={i ? `${i * 5}%` : 3} y="12" textAnchor="middle">{i ? (i === 20 ? '0' : i * 3 - 60) : 'dB'}</text>
        ))}
      </MeterScale>
    </Panel>
  );
}

function SelectionPanel() {
  return (
    <Panel>
      <Tabs><ActiveTab line={false}>Выбор/Видимое</ActiveTab></Tabs>
      <SelTable>
        <thead><tr><th aria-label="Параметр" /><th>Начало</th><th>Конец</th></tr></thead>
        <tbody>
          <tr><th>Выделение</th><td>1:06.644</td><td>1:06.644</td></tr>
          <tr><th>Вид</th><td>0:00.000</td><td>4:53.866</td></tr>
        </tbody>
      </SelTable>
    </Panel>
  );
}

export default function App() {
  return (
    <>
      <GlobalStyle />
      <Desktop>
        <DesktopLabel $y={52}>сс</DesktopLabel>
        <DesktopIcon $y={106} $c="#e8eef2" /><DesktopLabel $y={121} $x={3}>C</DesktopLabel>
        <DesktopIcon $y={186} $c="#e8eef2" /><DesktopLabel $y={204} $x={1}>A</DesktopLabel>
        <DesktopIcon $y={256} $c="#1565b0" /><DesktopLabel $y={286} $x={1}>N</DesktopLabel>
        <DesktopIcon $y={340} $c="#b8324a" /><DesktopIcon $y={421} $c="#b8324a" />
        <DesktopIcon $y={504} $c="#d6e6f4" /><DesktopLabel $y={533}>q</DesktopLabel>
        <DesktopIcon $y={584} $c="#c08a2a" /><DesktopLabel $y={614} $x={1}>C</DesktopLabel>
        <DesktopIcon $y={667} $c="#4a9a4a" /><DesktopLabel $y={778}>4</DesktopLabel>
        <DesktopLabel $y={788} $x={76}>P</DesktopLabel><DesktopLabel $y={788} $x={121}>Photosh</DesktopLabel>
        <BackWindow><BackBadge /><BackScroll /></BackWindow>
        <Window>
          <TitleBar>
            <Logo>Au</Logo><AppName>Adobe Audition</AppName>
            <FrameButton aria-label="Свернуть"><Icon name="min" size={13} /></FrameButton>
            <FrameButton aria-label="Развернуть"><Icon name="max" size={13} /></FrameButton>
            <FrameButton aria-label="Закрыть"><Icon name="close" size={13} /></FrameButton>
          </TitleBar>
          <MenuBar>
            {['Файл', 'Правка', 'Мультитрек', 'Клип', 'Эффекты', 'Избранное', 'Вид', 'Окно', 'Справка'].map((m) => <MenuItem key={m}>{m}</MenuItem>)}
          </MenuBar>
          <ToolBar>
            <Grip />
            <ModeButton $on><Icon name="wave" />Тип сигнала</ModeButton>
            <ModeButton><Icon name="multi" />Мультитрек</ModeButton>
            <Divider $gap={17} />
            <ToolButton aria-label="Спектр"><Icon name="spectral" /></ToolButton>
            <ToolButton aria-label="Высота тона"><Icon name="pitch" /></ToolButton>
            <Divider $gap={4} />
            {tools.map(([icon, label]) => <ToolButton key={icon} aria-label={label} $dim $on={icon === 'ibeam'}><Icon name={icon} size={15} /></ToolButton>)}
            <Workspaces>
              <WorkspaceButton>Восстановление</WorkspaceButton><WorkspaceButton>Громкость</WorkspaceButton><WorkspaceButton>Классическое</WorkspaceButton>
              <WorkspaceButton aria-label="Другие рабочие среды"><Icon name="chevrons" /></WorkspaceButton>
            </Workspaces>
            <ToolTail />
          </ToolBar>
          <Workspace>
            <LeftColumn><FilesPanel /><ExplorerPanel /><HistoryPanel /></LeftColumn>
            <RightArea>
              <Split $side={257}><EditorPanel /><SoundPanel /></Split>
              <Split $side={225}><LevelsPanel /><SelectionPanel /></Split>
            </RightArea>
          </Workspace>
          <StatusBar>
            <StatusMain>Чтение MP3 аудио выполнено за 1,36 секунд</StatusMain>
            <StatusCell $w={41}>&nbsp;</StatusCell>
            <StatusCell $w={98}>&nbsp;</StatusCell>
            <StatusCell $w={222}>44100 Гц ● 32-бит (с плавающей точкой) ● Стерео</StatusCell>
            <StatusCell $w={49}>98,87 МБ</StatusCell>
            <StatusCell $w={54}>4:53.866</StatusCell>
            <StatusCell $w={88}>95,59 Гб свободно</StatusCell>
            <StatusCell $w={39}>&nbsp;</StatusCell>
          </StatusBar>
        </Window>
      </Desktop>
    </>
  );
}
